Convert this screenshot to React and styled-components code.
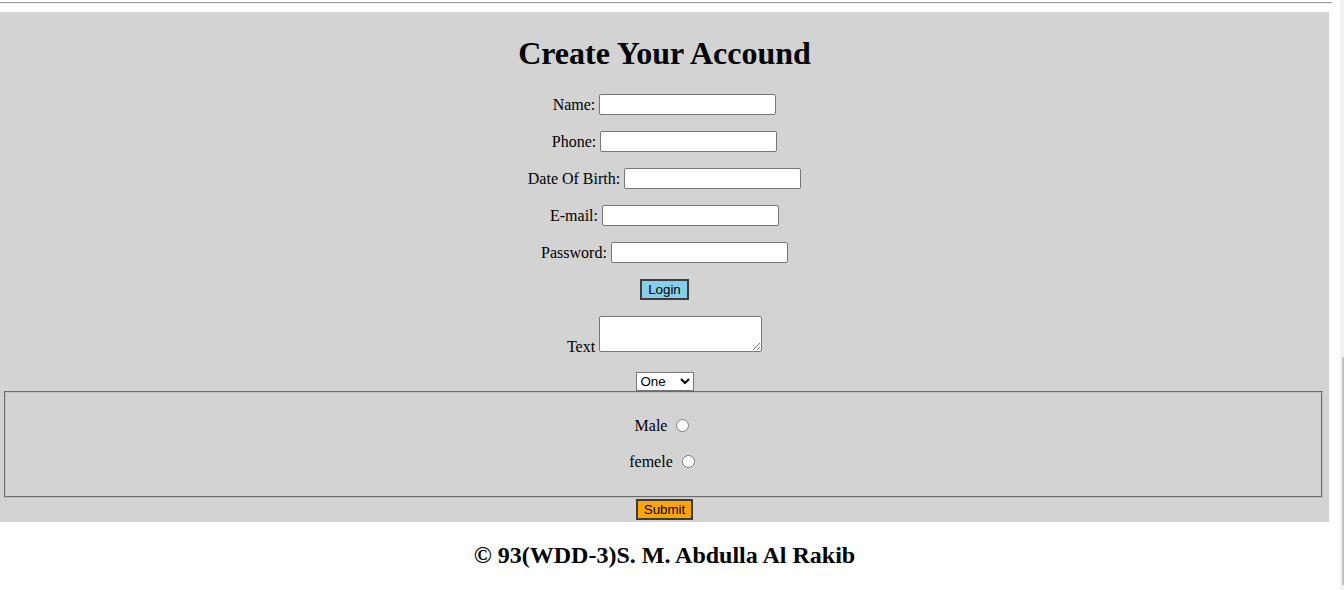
import styled, { createGlobalStyle } from 'styled-components';

const GlobalStyle = createGlobalStyle`
  html, body {
    margin: 0;
    padding: 0;
    overflow: hidden;
    background: #fff;
  }
  body {
    font-family: "Liberation Serif", "Times New Roman", serif;
    font-size: 16px;
    color: #000;
  }
`;

const App = () => {
  return (
    <StPage>
      <GlobalStyle />
      <StMain>
        <StRule />
        <StFormSection>
          <StTitle>Create Your Accound</StTitle>
          <StFields>
            <StRow>
              Name: <StInput type="text" />
            </StRow>
            <StRow>
              Phone: <StInput type="text" />
            </StRow>
            <StRow>
              Date Of Birth: <StInput type="text" />
            </StRow>
            <StRow>
              E-mail: <StInput type="email" />
            </StRow>
            <StRow>
              Password: <StInput type="password" />
            </StRow>
            <StRow>
              <StButton type="button" $bg="#87ceeb">Login</StButton>
            </StRow>
            <StTextRow>
              Text <StTextArea />
            </StTextRow>
          </StFields>
          <StSelectRow>
            <StSelect defaultValue="one">
              <option value="one">One</option>
              <option value="two">Two</option>
              <option value="three">Three</option>
            </StSelect>
          </StSelectRow>
          <StFieldset>
            <StRadioRow>
              Male <StRadio type="radio" name="gender" />
            </StRadioRow>
            <StRadioRow>
              femele <StRadio type="radio" name="gender" />
            </StRadioRow>
          </StFieldset>
          <StSubmitRow>
            <StButton type="submit" $bg="#ffa500">Submit</StButton>
          </StSubmitRow>
        </StFormSection>
        <StFooter>© 93(WDD-3)S. M. Abdulla Al Rakib</StFooter>
      </StMain>
      <StScrollTrack>
        <StScrollThumb />
      </StScrollTrack>
    </StPage>
  );
};
export default App;

const StPage = styled.div`
  display: flex;
  width: 1344px;
  height: 590px;
`;

const StMain = styled.div`
  width: 1340px;
  display: flex;
  flex-direction: column;
`;

const StRule = styled.hr`
  margin: 2px 8px 8px 0;
  height: 0;
  border: none;
  border-top: 1px solid #9a9a9a;
  border-bottom: 1px solid #eeeeee;
`;

const StFormSection = styled.section`
  margin-right: 11px;
  background: #d3d3d3;
  display: flex;
  flex-direction: column;
  align-items: center;
  padding-bottom: 2px;
`;

const StTitle = styled.h1`
  margin: 23px 0 22px 0;
  font-size: 32px;
  line-height: 37px;
  font-weight: bold;
`;

const StFields = styled.div`
  display: flex;
  flex-direction: column;
  align-items: center;
  gap: 16px;
`;

const StRow = styled.div`
  height: 21px;
  line-height: 21px;
  white-space: pre;
  display: flex;
  align-items: center;
`;

const StInput = styled.input`
  box-sizing: border-box;
  width: 177px;
  height: 21px;
  margin: 0;
  padding: 1px 2px;
  border: 1px solid #767676;
  border-radius: 2px;
  background: #fff;
  font: 13.33px "Liberation Sans", Arial, sans-serif;
`;

const StButton = styled.button`
  box-sizing: border-box;
  height: 21px;
  margin: 0;
  padding: 1px 6px;
  border: 2px solid #3c3c3c;
  background: ${(p) => p.$bg};
  color: #000;
  font: 13.33px "Liberation Sans", Arial, sans-serif;
  line-height: 15px;
`;

const StTextRow = styled.div`
  line-height: 20px;
`;

const StTextArea = styled.textarea`
  box-sizing: border-box;
  width: 163px;
  height: 36px;
  margin: 0;
  padding: 2px;
  border: 1px solid #767676;
  border-radius: 2px;
  background: #fff;
  vertical-align: baseline;
  font: 13.33px "Liberation Mono", monospace;
`;

const StSelectRow = styled.div`
  margin-top: 15px;
  height: 19px;
  display: flex;
`;

const StSelect = styled.select`
  box-sizing: border-box;
  width: 58px;
  height: 19px;
  margin: 0;
  border: 1px solid #767676;
  border-radius: 0;
  background: #fff;
  font: 13.33px "Liberation Sans", Arial, sans-serif;
`;

const StFieldset = styled.fieldset`
  box-sizing: border-box;
  align-self: stretch;
  margin: 0 6px 0 4px;
  height: 107px;
  padding: 23px 12px 0 12px;
  border: 2px groove #c0c0c0;
  display: flex;
  flex-direction: column;
  align-items: center;
  gap: 16px;
`;

const StRadioRow = styled.div`
  height: 20px;
  display: flex;
  align-items: center;
  white-space: pre;
`;

const StRadio = styled.input`
  width: 13px;
  height: 13px;
  margin: -2px 3px 0 5px;
`;

const StSubmitRow = styled.div`
  display: flex;
  margin-top: 1px;
`;

const StFooter = styled.h2`
  margin: 20px 0 0 0;
  font-size: 24px;
  line-height: 27px;
  font-weight: bold;
  text-align: center;
  width: 1329px;
`;

const StScrollTrack = styled.div`
  width: 4px;
  background: #f1f1f1;
  display: flex;
  flex-direction: column;
  padding-top: 357px;
`;

const StScrollThumb = styled.div`
  margin-left: 2px;
  width: 2px;
  height: 228px;
  background: #c1c1c1;
`;
